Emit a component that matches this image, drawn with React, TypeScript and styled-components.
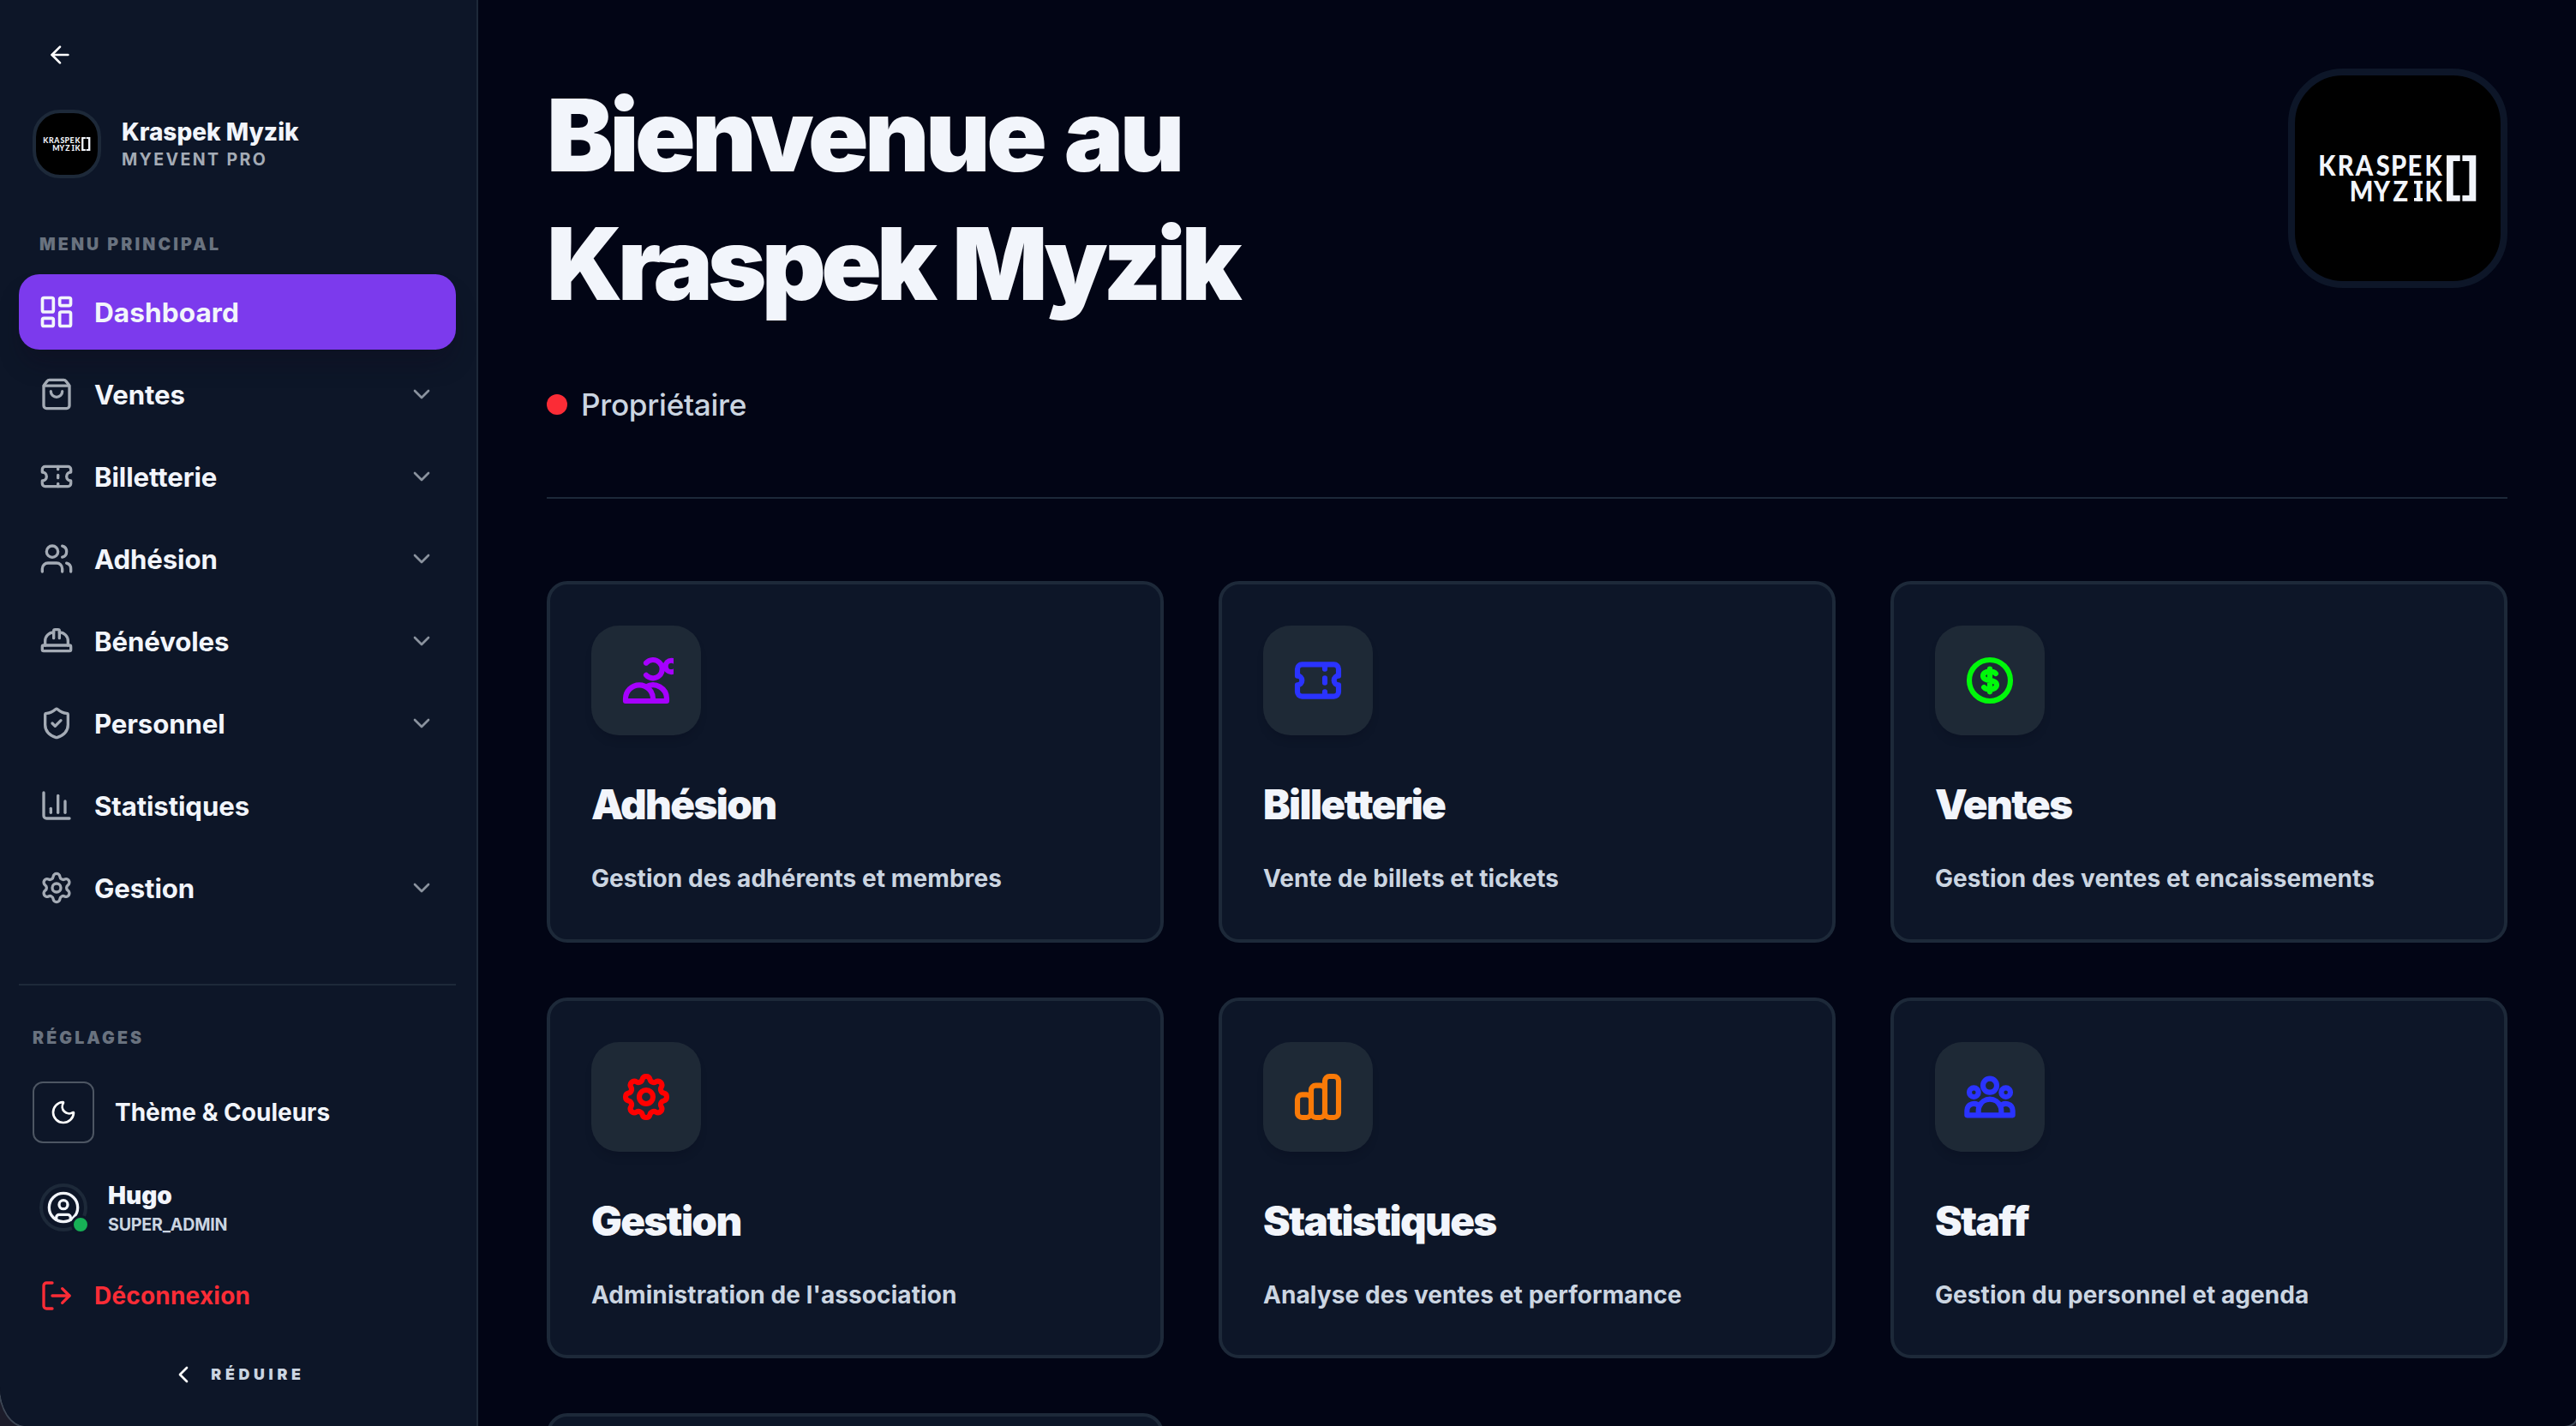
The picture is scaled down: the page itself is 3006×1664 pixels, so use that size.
import React from "react";
import styled, { createGlobalStyle } from "styled-components";
import {
  ArrowLeft,
  ChartColumn,
  ChevronDown,
  ChevronLeft,
  CircleUser,
  HardHat,
  LayoutDashboard,
  LogOut,
  Moon,
  Settings,
  ShieldCheck,
  ShoppingBag,
  Ticket,
  Users,
  type LucideIcon,
} from "lucide-react";

const color = {
  page: "#020515",
  panel: "#0d1628",
  line: "#1d2939",
  tile: "#1e2936",
  text: "#f2f5fb",
  soft: "#cbd5e1",
  muted: "#a4abb5",
  faint: "#69727f",
  accent: "#7c3aed",
  danger: "#fb2c36",
};

const GlobalStyle = createGlobalStyle`
  *, *::before, *::after { box-sizing: border-box; }
  html, body { margin: 0; background: #1c1c2a; }
  body {
    font-family: Inter, "Liberation Sans", sans-serif;
    color: ${color.text};
    overflow: hidden;
  }
  svg { display: block; flex: none; }
  h1, h2, p { margin: 0; }
`;

const Shell = styled.div`
  display: flex;
  width: 100vw;
  height: 100vh;
  overflow: hidden;
  background: ${color.page};
  border-radius: 0 0 14px 30px / 0 0 10px 46px;
  box-shadow: 0 0 0 2px #3c4654;
`;

const Sidebar = styled.aside`
  display: flex;
  flex-direction: column;
  flex: none;
  width: 558px;
  padding: 48px 24px 0 22px;
  background: ${color.panel};
  border-right: 2px solid ${color.line};
`;

const BackButton = styled.button`
  align-self: flex-start;
  margin-left: 32px;
  padding: 0;
  border: 0;
  background: none;
  color: #fff;
`;

const Brand = styled.div`
  display: flex;
  align-items: center;
  gap: 24px;
  height: 80px;
  margin: 48px 0 0 16px;
`;

const LogoFrame = styled.div<{ $size: number; $border: number; $radius: number; $edge: string }>`
  flex: none;
  width: ${(p) => p.$size}px;
  height: ${(p) => p.$size}px;
  border: ${(p) => p.$border}px solid ${(p) => p.$edge};
  border-radius: ${(p) => p.$radius}px;
  background: #000;
  overflow: hidden;
`;

const BrandText = styled.div`
  display: flex;
  flex-direction: column;
`;

const BrandName = styled.span`
  padding-top: 2px;
  font-size: 28px;
  line-height: 35px;
  font-weight: 800;
`;

const BrandTag = styled.span`
  font-size: 19.6px;
  line-height: 29px;
  font-weight: 700;
  letter-spacing: 2.35px;
  color: ${color.muted};
`;

const SectionLabel = styled.div<{ $indent: number; $top: number }>`
  margin: ${(p) => p.$top}px 0 0 ${(p) => p.$indent}px;
  font-size: 19.6px;
  line-height: 30px;
  font-weight: 900;
  letter-spacing: 3.1px;
  color: ${color.faint};
`;

const Nav = styled.nav`
  display: flex;
  flex-direction: column;
  gap: 8px;
  margin-top: 20px;
`;

const NavItem = styled.a<{ $active?: boolean }>`
  display: flex;
  align-items: center;
  gap: 24px;
  height: 88px;
  padding: 0 24px;
  border-radius: 24px;
  font-size: ${(p) => (p.$active ? 31.6 : 31.2)}px;
  font-weight: ${(p) => (p.$active ? 750 : 700)};
  letter-spacing: ${(p) => (p.$active ? 0.05 : -0.12)}px;
  background: ${(p) => (p.$active ? color.accent : "transparent")};
  box-shadow: ${(p) => (p.$active ? "0 20px 30px -6px rgba(16, 8, 28, 0.3)" : "none")};
  & > svg:first-child {
    color: ${(p) => (p.$active ? color.text : color.muted)};
    transform: ${(p) => (p.$active ? "scale(1.1)" : "none")};
  }
  & > svg:last-child:not(:first-child) {
    color: #8a929e;
  }
`;

const NavLabel = styled.span`
  flex: 1;
  padding-top: 1px;
`;

const Divider = styled.hr`
  width: 100%;
  height: 2px;
  margin: 68px 0 0;
  border: 0;
  background: ${color.line};
`;

const SettingRow = styled.div`
  display: flex;
  align-items: center;
  gap: 24px;
  margin: 36px 0 0 16px;
  font-size: 28px;
  font-weight: 750;
`;

const IconButton = styled.button`
  display: grid;
  place-items: center;
  width: 72px;
  height: 72px;
  padding: 0;
  border: 2px solid #4d5663;
  border-radius: 12px;
  background: none;
  color: #fff;
`;

const UserRow = styled.div`
  display: flex;
  align-items: center;
  gap: 24px;
  height: 72px;
  margin: 39px 0 0 24px;
`;

const Avatar = styled.div`
  position: relative;
  display: grid;
  place-items: center;
  width: 56px;
  height: 56px;
  border: 4px solid ${color.line};
  border-radius: 50%;
`;

const Presence = styled.span`
  position: absolute;
  right: -7px;
  bottom: -7px;
  width: 22px;
  height: 22px;
  border: 3px solid ${color.panel};
  border-radius: 50%;
  background: #17b056;
`;

const UserText = styled.div`
  display: flex;
  flex-direction: column;
  padding-top: 3px;
`;

const UserName = styled.span`
  font-size: 28px;
  line-height: 35px;
  font-weight: 900;
`;

const UserRole = styled.span`
  padding-top: 1px;
  font-size: 19.6px;
  line-height: 30px;
  font-weight: 700;
  letter-spacing: -0.2px;
  color: ${color.soft};
`;

const LogoutRow = styled.a`
  display: flex;
  align-items: center;
  gap: 24px;
  height: 80px;
  margin-top: 27px;
  padding-left: 24px;
  font-size: 28px;
  font-weight: 750;
  letter-spacing: 0.2px;
  color: ${color.danger};
`;

const CollapseRow = styled.button`
  display: flex;
  align-items: center;
  justify-content: center;
  gap: 16px;
  height: 56px;
  margin-top: 24px;
  padding: 0;
  border: 0;
  background: none;
  font: 900 17.8px/28px Inter, "Liberation Sans", sans-serif;
  letter-spacing: 4.7px;
  color: ${color.soft};
  & > svg {
    color: #fff;
  }
`;

const Main = styled.main`
  flex: 1;
  padding: 80px 80px 0;
  overflow: hidden;
`;

const Hero = styled.header`
  display: flex;
  justify-content: space-between;
  align-items: flex-start;
  height: 502px;
  border-bottom: 2px solid ${color.line};
`;

const Title = styled.h1`
  padding-top: 3px;
  font-size: 116.5px;
  line-height: 150px;
  font-weight: 900;
`;

const TitleLine = styled.span<{ $tracking: number; $wordGap: number }>`
  display: block;
  letter-spacing: ${(p) => p.$tracking}px;
  word-spacing: ${(p) => p.$wordGap}px;
`;

const RoleLine = styled.p`
  display: flex;
  align-items: center;
  gap: 16px;
  margin-top: 61px;
  font-size: 35.2px;
  line-height: 56px;
  font-weight: 500;
  letter-spacing: -0.3px;
  color: ${color.soft};
`;

const RoleDot = styled.span`
  width: 24px;
  height: 24px;
  border-radius: 50%;
  background: ${color.danger};
`;

const Grid = styled.section`
  display: grid;
  grid-template-columns: repeat(3, 1fr);
  gap: 64px;
  margin-top: 96px;
`;

const Card = styled.article`
  padding: 48px 48px 47px;
  min-height: 421.5px;
  border: 4px solid ${color.line};
  border-radius: 24px;
  background: ${color.panel};
`;

const Tile = styled.div<{ $tint: string }>`
  display: grid;
  place-items: center;
  width: 128px;
  height: 128px;
  border-radius: 32px;
  background: ${color.tile};
  box-shadow: 0 8px 12px -4px rgba(6, 6, 20, 0.2);
  color: ${(p) => p.$tint};
`;

const CardTitle = styled.h2`
  margin-top: 49px;
  font-size: 47.5px;
  line-height: 64px;
  font-weight: 900;
  letter-spacing: -1.65px;
`;

const CardText = styled.p`
  margin-top: 32px;
  font-size: 28px;
  line-height: 45.5px;
  font-weight: 750;
  letter-spacing: 0.08px;
  color: ${color.soft};
`;

function LogoMark() {
  return (
    <svg width="100%" height="100%" viewBox="0 0 240 240" fill={color.text}>
      <g fontFamily="Lato, sans-serif" fontWeight={900} fontSize={33} transform="scale(0.88 1)">
        <text x="30.9 56.6 80.5 107.7 127.3 149.4 172.2" y="117.3">KRASPEK</text>
        <text x="72.5 104.5 130.1 158.9 172.2" y="146.7">MYZIK</text>
      </g>
      <path d="M139 123h10v3.6h-10zM139 143.1h10v3.6h-10z" />
      <path d="M177 93.3h15.7v6.6h-8v40.2h8v6.6H177zM211.3 93.3h-15.9v6.6h8v40.2h-8v6.6h15.9z" />
    </svg>
  );
}

function OutlineIcon({ paths }: { paths: string[] }) {
  return (
    <svg
      width={64}
      height={64}
      viewBox="0 0 24 24"
      fill="none"
      stroke="currentColor"
      strokeWidth={2.3}
      strokeLinecap="round"
      strokeLinejoin="round"
    >
      {paths.map((d) => (
        <path key={d} d={d} />
      ))}
    </svg>
  );
}

const navItems: { label: string; icon: LucideIcon; active?: boolean; nested?: boolean }[] = [
  { label: "Dashboard", icon: LayoutDashboard, active: true },
  { label: "Ventes", icon: ShoppingBag, nested: true },
  { label: "Billetterie", icon: Ticket, nested: true },
  { label: "Adhésion", icon: Users, nested: true },
  { label: "Bénévoles", icon: HardHat, nested: true },
  { label: "Personnel", icon: ShieldCheck, nested: true },
  { label: "Statistiques", icon: ChartColumn },
  { label: "Gestion", icon: Settings, nested: true },
];

const cards = [
  {
    title: "Adhésion",
    text: "Gestion des adhérents et membres",
    tint: "#a600ff",
    paths: [
      "M12 4.354a4 4 0 110 5.292M15 21H3v-1a6 6 0 0112 0v1zm0 0h6v-1a6 6 0 00-9-5.197m13.5-9a2.5 2.5 0 11-5 0 2.5 2.5 0 015 0z",
    ],
  },
  {
    title: "Billetterie",
    text: "Vente de billets et tickets",
    tint: "#2a33ff",
    paths: [
      "M15 5v2m0 4v2m0 4v2M5 5a2 2 0 00-2 2v3a2 2 0 110 4v3a2 2 0 002 2h14a2 2 0 002-2v-3a2 2 0 110-4V7a2 2 0 00-2-2H5z",
    ],
  },
  {
    title: "Ventes",
    text: "Gestion des ventes et encaissements",
    tint: "#00f80a",
    paths: [
      "M12 8c-1.657 0-3 .895-3 2s1.343 2 3 2 3 .895 3 2-1.343 2-3 2m0-8c1.11 0 2.08.402 2.599 1M12 8V7m0 1v8m0 0v1m0-1c-1.11 0-2.08-.402-2.599-1M21 12a9 9 0 11-18 0 9 9 0 0118 0z",
    ],
  },
  {
    title: "Gestion",
    text: "Administration de l'association",
    tint: "#ff0000",
    paths: [
      "M10.325 4.317c.426-1.756 2.924-1.756 3.35 0a1.724 1.724 0 002.573 1.066c1.543-.94 3.31.826 2.37 2.37a1.724 1.724 0 001.065 2.572c1.756.426 1.756 2.924 0 3.35a1.724 1.724 0 00-1.066 2.573c.94 1.543-.826 3.31-2.37 2.37a1.724 1.724 0 00-2.572 1.065c-.426 1.756-2.924 1.756-3.35 0a1.724 1.724 0 00-2.573-1.066c-1.543.94-3.31-.826-2.37-2.37a1.724 1.724 0 00-1.065-2.572c-1.756-.426-1.756-2.924 0-3.35a1.724 1.724 0 001.066-2.573c-.94-1.543.826-3.31 2.37-2.37.996.608 2.296.07 2.572-1.065z",
      "M15 12a3 3 0 11-6 0 3 3 0 016 0z",
    ],
  },
  {
    title: "Statistiques",
    text: "Analyse des ventes et performance",
    tint: "#f97a08",
    paths: [
      "M9 19v-6a2 2 0 00-2-2H5a2 2 0 00-2 2v6a2 2 0 002 2h2a2 2 0 002-2zm0 0V9a2 2 0 012-2h2a2 2 0 012 2v10m-6 0a2 2 0 002 2h2a2 2 0 002-2m0 0V5a2 2 0 012-2h2a2 2 0 012 2v14a2 2 0 01-2 2h-2a2 2 0 01-2-2z",
    ],
  },
  {
    title: "Staff",
    text: "Gestion du personnel et agenda",
    tint: "#2a33ff",
    paths: [
      "M17 20h5v-2a3 3 0 00-5.356-1.857M17 20H7m10 0v-2c0-.656-.126-1.283-.356-1.857M7 20H2v-2a3 3 0 015.356-1.857M7 20v-2c0-.656.126-1.283.356-1.857m0 0a5.002 5.002 0 019.288 0M15 7a3 3 0 11-6 0 3 3 0 016 0zm6 3a2 2 0 11-4 0 2 2 0 014 0zM7 10a2 2 0 11-4 0 2 2 0 014 0z",
    ],
  },
];

export default function App() {
  return (
    <>
      <GlobalStyle />
      <Shell>
        <Sidebar>
          <BackButton aria-label="Retour">
            <ArrowLeft size={32} />
          </BackButton>
          <Brand>
            <LogoFrame $size={80} $border={4} $radius={32} $edge={color.line}>
              <LogoMark />
            </LogoFrame>
            <BrandText>
              <BrandName>Kraspek Myzik</BrandName>
              <BrandTag>MYEVENT PRO</BrandTag>
            </BrandText>
          </Brand>
          <SectionLabel $indent={24} $top={62}>MENU PRINCIPAL</SectionLabel>
          <Nav>
            {navItems.map(({ label, icon: Icon, active, nested }) => (
              <NavItem key={label} $active={active}>
                <Icon size={40} />
                <NavLabel>{label}</NavLabel>
                {nested && <ChevronDown size={32} />}
              </NavItem>
            ))}
          </Nav>
          <Divider />
          <SectionLabel $indent={16} $top={46}>RÉGLAGES</SectionLabel>
          <SettingRow>
            <IconButton aria-label="Thème">
              <Moon size={32} />
            </IconButton>
            Thème &amp; Couleurs
          </SettingRow>
          <UserRow>
            <Avatar>
              <CircleUser size={40} />
              <Presence />
            </Avatar>
            <UserText>
              <UserName>Hugo</UserName>
              <UserRole>SUPER_ADMIN</UserRole>
            </UserText>
          </UserRow>
          <LogoutRow>
            <LogOut size={40} />
            Déconnexion
          </LogoutRow>
          <CollapseRow>
            <ChevronLeft size={32} />
            RÉDUIRE
          </CollapseRow>
        </Sidebar>
        <Main>
          <Hero>
            <div>
              <Title>
                <TitleLine $tracking={-4.6} $wordGap={6}>Bienvenue au</TitleLine>
                <TitleLine $tracking={-5.8} $wordGap={6}>Kraspek Myzik</TitleLine>
              </Title>
              <RoleLine>
                <RoleDot />
                Propriétaire
              </RoleLine>
            </div>
            <LogoFrame $size={256} $border={8} $radius={64} $edge={color.panel}>
              <LogoMark />
            </LogoFrame>
          </Hero>
          <Grid>
            {cards.map((card) => (
              <Card key={card.title}>
                <Tile $tint={card.tint}>
                  <OutlineIcon paths={card.paths} />
                </Tile>
                <CardTitle>{card.title}</CardTitle>
                <CardText>{card.text}</CardText>
              </Card>
            ))}
            <Card />
          </Grid>
        </Main>
      </Shell>
    </>
  );
}
